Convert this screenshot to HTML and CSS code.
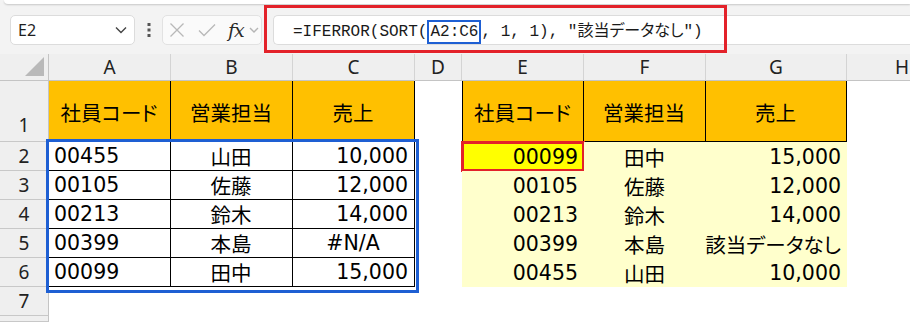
FILE: index.html
```html
<!DOCTYPE html>
<html lang="ja">
<head>
    <meta charset="UTF-8">
    <meta name="viewport" content="width=device-width, initial-scale=1.0">
    <title>SORT と IFERROR</title>
    <link rel="stylesheet" href="styles.css">
</head>
<body>
    <div class="ribbon-edge"></div>

    <!-- 数式バー -->
    <div class="formula-bar">
        <div class="name-box">
            <span>E2</span>
            <svg class="chev" width="12" height="8" viewBox="0 0 12 8"><path d="M1 1.5 L6 6.5 L11 1.5"/></svg>
        </div>
        <div class="grip">
            <svg width="4" height="16" viewBox="0 0 4 16"><rect x="0.5" y="1" width="3" height="3"/><rect x="0.5" y="6.5" width="3" height="3"/><rect x="0.5" y="12" width="3" height="3"/></svg>
        </div>
        <div class="fx-buttons">
            <svg class="ico" width="16" height="16" viewBox="0 0 16 16"><path d="M1.5 1.5 L14.5 14.5 M14.5 1.5 L1.5 14.5"/></svg>
            <svg class="ico" width="18" height="16" viewBox="0 0 18 16"><path d="M1 8.5 L6 13.5 L17 2.5"/></svg>
            <span class="fx">fx</span>
            <svg class="chev small" width="10" height="6" viewBox="0 0 10 6"><path d="M1 1 L5 5 L9 1"/></svg>
        </div>
        <div class="formula-input">
            <div class="callout"></div>
            <span class="formula">=IFERROR(SORT(<span class="ref">A2:C6</span>, 1, 1), "該当データなし")</span>
        </div>
    </div>

    <!-- シート -->
    <div class="sheet">
        <div class="corner"><span class="tri"></span></div>
        <div class="ch">A</div><div class="ch">B</div><div class="ch">C</div><div class="ch">D</div>
        <div class="ch">E</div><div class="ch">F</div><div class="ch">G</div><div class="ch cut">H</div>

        <div class="rh first">1</div>
        <div class="c hd">社員コード</div><div class="c hd">営業担当</div><div class="c hd">売上</div>
        <div class="c"></div>
        <div class="c hd left">社員コード</div><div class="c hd">営業担当</div><div class="c hd">売上</div>
        <div class="c"></div>

        <div class="rh">2</div>
        <div class="c tb l">00455</div><div class="c tb">山田</div><div class="c tb r">10,000</div>
        <div class="c"></div>
        <div class="c res r hit">00099</div><div class="c res">田中</div><div class="c res r">15,000</div>
        <div class="c"></div>

        <div class="rh">3</div>
        <div class="c tb l">00105</div><div class="c tb">佐藤</div><div class="c tb r">12,000</div>
        <div class="c"></div>
        <div class="c res r">00105</div><div class="c res">佐藤</div><div class="c res r">12,000</div>
        <div class="c"></div>

        <div class="rh">4</div>
        <div class="c tb l">00213</div><div class="c tb">鈴木</div><div class="c tb r">14,000</div>
        <div class="c"></div>
        <div class="c res r">00213</div><div class="c res">鈴木</div><div class="c res r">14,000</div>
        <div class="c"></div>

        <div class="rh">5</div>
        <div class="c tb l">00399</div><div class="c tb">本島</div><div class="c tb">#N/A</div>
        <div class="c"></div>
        <div class="c res r">00399</div><div class="c res">本島</div><div class="c res r">該当データなし</div>
        <div class="c"></div>

        <div class="rh">6</div>
        <div class="c tb l">00099</div><div class="c tb">田中</div><div class="c tb r">15,000</div>
        <div class="c"></div>
        <div class="c res r">00455</div><div class="c res">山田</div><div class="c res r">10,000</div>
        <div class="c"></div>

        <div class="rh">7</div>
        <div class="c rest"></div>
        <div class="rh"></div>
        <div class="c rest"></div>

        <div class="sel"></div>
    </div>
</body>
</html>
```

FILE: styles.css
```css
body {
    margin: 0;
    width: 910px;
    height: 322px;
    overflow: hidden;
    background-color: #f3f3f3;
    font-family: "Noto Sans", "Noto Sans CJK JP", sans-serif;
    color: #1f1f1f;
}

.ribbon-edge {
    height: 4px;
    margin-left: 4px;
    background-color: #fff;
    border-radius: 0 0 0 8px;
    box-shadow: 0 1px 2px rgba(0, 0, 0, 0.18);
}

/* 数式バー */
.formula-bar {
    display: flex;
    align-items: flex-start;
    height: 50px;
    padding: 11px 0 0 10px;
    box-sizing: border-box;
}
.name-box {
    display: flex;
    align-items: center;
    justify-content: space-between;
    width: 125px;
    height: 30px;
    padding: 0 7px 0 7px;
    box-sizing: border-box;
    background-color: #fff;
    border: 1px solid #dcdcdc;
    border-radius: 5px;
    font-size: 16px;
}
.chev path {
    fill: none;
    stroke: #444;
    stroke-width: 1.4;
}
.chev.small path {
    stroke: #b5b5b5;
}
.grip {
    width: 27px;
    height: 30px;
    display: flex;
    align-items: center;
    justify-content: center;
}
.grip rect {
    fill: #555;
}
.fx-buttons {
    display: flex;
    align-items: center;
    gap: 13px;
    width: 100px;
    height: 30px;
    padding-left: 6px;
    box-sizing: border-box;
    background-color: #fafafa;
    border: 1px solid #e2e2e2;
    border-radius: 5px;
    overflow: hidden;
}
.ico path {
    fill: none;
    stroke: #b8b8b8;
    stroke-width: 1.3;
}
.fx {
    font-family: "DejaVu Serif", "Liberation Serif", serif;
    font-style: italic;
    font-size: 19px;
    color: #2a2a2a;
    margin-left: -1px;
    margin-right: -8px;
    letter-spacing: -1px;
}
.formula-input {
    position: relative;
    flex: 1;
    height: 30px;
    margin-left: 11px;
    padding-left: 19px;
    display: flex;
    align-items: center;
    box-sizing: border-box;
    background-color: #fff;
    border: 1px solid #dcdcdc;
    border-right: none;
    border-radius: 5px 0 0 5px;
}
.formula {
    font-family: "Liberation Mono", "Noto Sans CJK JP", monospace;
    font-size: 16px;
    color: #1a1a1a;
    white-space: nowrap;
    font-feature-settings: "palt";
}
.ref {
    display: inline-block;
    line-height: 20px;
    padding: 0 1px;
    border: 2px solid #1e5fd3;
}
.callout {
    position: absolute;
    left: -10px;
    top: -11px;
    width: 463px;
    height: 48px;
    box-sizing: border-box;
    border: 3px solid #e3222a;
}

/* シート */
.sheet {
    position: relative;
    display: grid;
    grid-template-columns: 49px 122px 122px 122px 47px 122px 122px 141px 63px;
    grid-template-rows: 27px 61px repeat(6, 29px) 1fr;
    height: 268px;
    background-color: #fff;
    font-family: "DejaVu Sans", "Noto Sans CJK JP", sans-serif;
    font-size: 20.5px;
    color: #000;
}
.corner, .ch, .rh {
    background-color: #efefef;
    font-family: "Noto Sans", sans-serif;
    font-size: 19px;
    color: #222;
}
.corner {
    position: relative;
    border-right: 1px solid #c4c4c4;
    border-bottom: 1px solid #c4c4c4;
}
.corner .tri {
    position: absolute;
    right: 4px;
    bottom: 4px;
    width: 0;
    height: 0;
    border-left: 19px solid transparent;
    border-bottom: 19px solid #b9b9b9;
}
.ch {
    display: flex;
    align-items: center;
    justify-content: center;
    border-right: 1px solid #d4d4d4;
    border-bottom: 1px solid #c4c4c4;
}
.ch.cut {
    justify-content: flex-start;
    padding-left: 48px;
    border-right: none;
    overflow: hidden;
}
.rh {
    display: flex;
    align-items: center;
    justify-content: center;
    border-right: 1px solid #c4c4c4;
    border-bottom: 1px solid #c8c8c8;
}
.rh.first {
    align-items: flex-end;
    padding-bottom: 3px;
}
.c {
    display: flex;
    align-items: center;
    justify-content: center;
    box-sizing: border-box;
    padding: 0 6px 0 5px;
    white-space: nowrap;
    font-feature-settings: "palt";
}
.c.l {
    justify-content: flex-start;
}
.c.r {
    justify-content: flex-end;
}
.hd {
    background-color: #ffc000;
    border-right: 1px solid #000;
    border-bottom: 1px solid #000;
    padding-top: 2px;
}
.hd.left {
    border-left: 1px solid #000;
}
.tb {
    border-right: 1px solid #000;
    border-bottom: 1px solid #000;
}
.res {
    background-color: #ffffcc;
}
.hit {
    background-color: #ffff00;
    box-shadow: inset 0 0 0 2px #e3222a;
    outline: 1px solid #e3222a;
}
.rest {
    grid-column: 2 / -1;
}
.sel {
    position: absolute;
    grid-column: 2 / 5;
    grid-row: 3 / 8;
    top: -3px;
    left: -3px;
    right: -4px;
    bottom: -6px;
    border: 3px solid #1e5fd3;
    pointer-events: none;
}
```
